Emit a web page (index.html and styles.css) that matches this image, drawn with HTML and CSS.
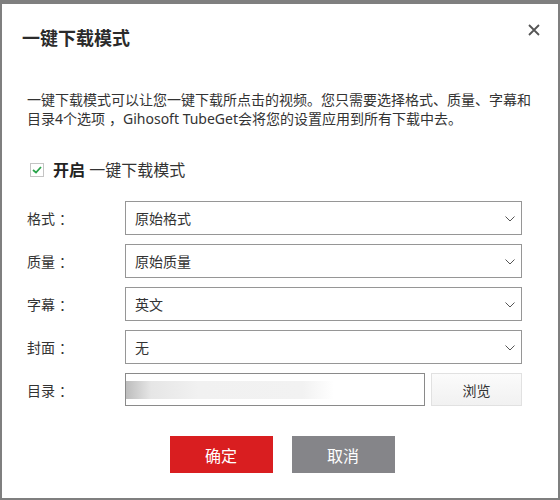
FILE: index.html
```html
<!DOCTYPE html>
<html lang="zh-CN">
<head>
<meta charset="utf-8">
<title>一键下载模式</title>
<link rel="stylesheet" href="styles.css">
</head>
<body>
<div class="window">
  <div class="header">
    <h1 class="title">一键下载模式</h1>
    <button class="close" aria-label="关闭">
      <svg width="12" height="12" viewBox="0 0 12 12"><path d="M1 1 L11 11 M11 1 L1 11" stroke="#555" stroke-width="1.8" fill="none"/></svg>
    </button>
  </div>
  <div class="content">
    <p class="desc">一键下载模式可以让您一键下载所点击的视频。您只需要选择格式、质量、字幕和<br>目录4个选项<span class="comma">，</span>Gihosoft TubeGet会将您的设置应用到所有下载中去。</p>
    <label class="enable">
      <span class="checkbox"><svg width="10" height="8" viewBox="0 0 10 8"><path d="M1 4 L4 6.5 L9 1" stroke="#2aa44a" stroke-width="1.8" fill="none"/></svg></span>
      <span class="enable-text"><b>开启</b> 一键下载模式</span>
    </label>
    <div class="form">
      <div class="row"><span class="label">格式<span class="colon">：</span></span><div class="select"><span>原始格式</span><svg class="chev" width="10" height="6" viewBox="0 0 10 6"><path d="M0.5 0.5 L5 5 L9.5 0.5" stroke="#555" stroke-width="1" fill="none"/></svg></div></div>
      <div class="row"><span class="label">质量<span class="colon">：</span></span><div class="select"><span>原始质量</span><svg class="chev" width="10" height="6" viewBox="0 0 10 6"><path d="M0.5 0.5 L5 5 L9.5 0.5" stroke="#555" stroke-width="1" fill="none"/></svg></div></div>
      <div class="row"><span class="label">字幕<span class="colon">：</span></span><div class="select"><span>英文</span><svg class="chev" width="10" height="6" viewBox="0 0 10 6"><path d="M0.5 0.5 L5 5 L9.5 0.5" stroke="#555" stroke-width="1" fill="none"/></svg></div></div>
      <div class="row"><span class="label">封面<span class="colon">：</span></span><div class="select"><span>无</span><svg class="chev" width="10" height="6" viewBox="0 0 10 6"><path d="M0.5 0.5 L5 5 L9.5 0.5" stroke="#555" stroke-width="1" fill="none"/></svg></div></div>
      <div class="row dir"><span class="label">目录<span class="colon">：</span></span><div class="path"><div class="path-fill"></div></div><button class="browse">浏览</button></div>
    </div>
    <div class="actions">
      <button class="btn ok">确定</button>
      <button class="btn cancel">取消</button>
    </div>
  </div>
</div>
</body>
</html>
```

FILE: styles.css
```css
* { box-sizing: border-box; }
html, body { margin: 0; padding: 0; background: #fff; }
body {
  font-family: "Noto Sans", "Noto Sans CJK SC", sans-serif;
  color: #333;
}
.window {
  width: 560px;
  height: 500px;
  border-style: solid;
  border-color: #7f7f7f;
  border-width: 4px 2px 2px 2px;
  background: #fff;
  overflow: hidden;
}
.header {
  display: flex;
  justify-content: space-between;
  align-items: flex-start;
  padding: 22px 18px 0 20px;
}
.title {
  margin: 0;
  font-size: 18px;
  line-height: 24px;
  font-weight: bold;
  color: #2b2b2b;
}
.close {
  border: 0;
  background: none;
  padding: 0;
  margin-top: -2px;
  width: 12px;
  height: 12px;
  display: flex;
}
.content {
  padding: 0 36px 0 25px;
}
.desc {
  margin: 40px 0 0 0;
  font-size: 14px;
  line-height: 19px;
  color: #333;
  white-space: nowrap;
}
.comma { padding-left: 4px; }
.colon { padding-left: 4px; }
.enable {
  display: flex;
  align-items: center;
  margin-top: 30px;
  height: 24px;
  padding-left: 3px;
}
.checkbox {
  width: 14px;
  height: 14px;
  border: 1px solid #c4c4c4;
  display: flex;
  align-items: center;
  justify-content: center;
  margin-right: 9px;
  background: #fff;
}
.enable-text {
  font-size: 16px;
  line-height: 24px;
  color: #333;
}
.enable-text b { color: #222; }
.form {
  margin-top: 19px;
  display: flex;
  flex-direction: column;
  gap: 9px;
}
.row {
  display: flex;
  align-items: center;
  height: 34px;
}
.row.dir { height: 33px; }
.label {
  width: 98px;
  flex: none;
  font-size: 14px;
  color: #333;
}
.select {
  flex: 1;
  height: 34px;
  border: 1px solid #969696;
  display: flex;
  align-items: center;
  justify-content: space-between;
  padding: 0 6px 0 9px;
  font-size: 14px;
  color: #333;
}
.chev { margin-top: 1px; }
.path {
  width: 300px;
  height: 33px;
  border: 1px solid #8a8a8a;
  display: flex;
  align-items: center;
}
.path-fill {
  width: 208px;
  height: 18px;
  background: linear-gradient(to right, #bdbdbd 0%, #e6e6e6 12%, #f1f1f1 35%, #f2f2f2 85%, #fff 100%);
}
.browse {
  margin-left: 6px;
  flex: 1;
  height: 33px;
  border: 1px solid #e1e1e1;
  background: linear-gradient(#fbfbfb, #f1f1f1);
  font-family: inherit;
  font-size: 14px;
  color: #333;
  padding: 0;
}
.actions {
  display: flex;
  justify-content: center;
  gap: 19px;
  margin-top: 30px;
  padding-left: 15px;
}
.btn {
  width: 103px;
  height: 37px;
  border: 0;
  font-family: inherit;
  font-size: 16px;
  color: #fff;
  padding: 0;
}
.ok { background: #d91e20; }
.cancel { background: #858589; }
```
